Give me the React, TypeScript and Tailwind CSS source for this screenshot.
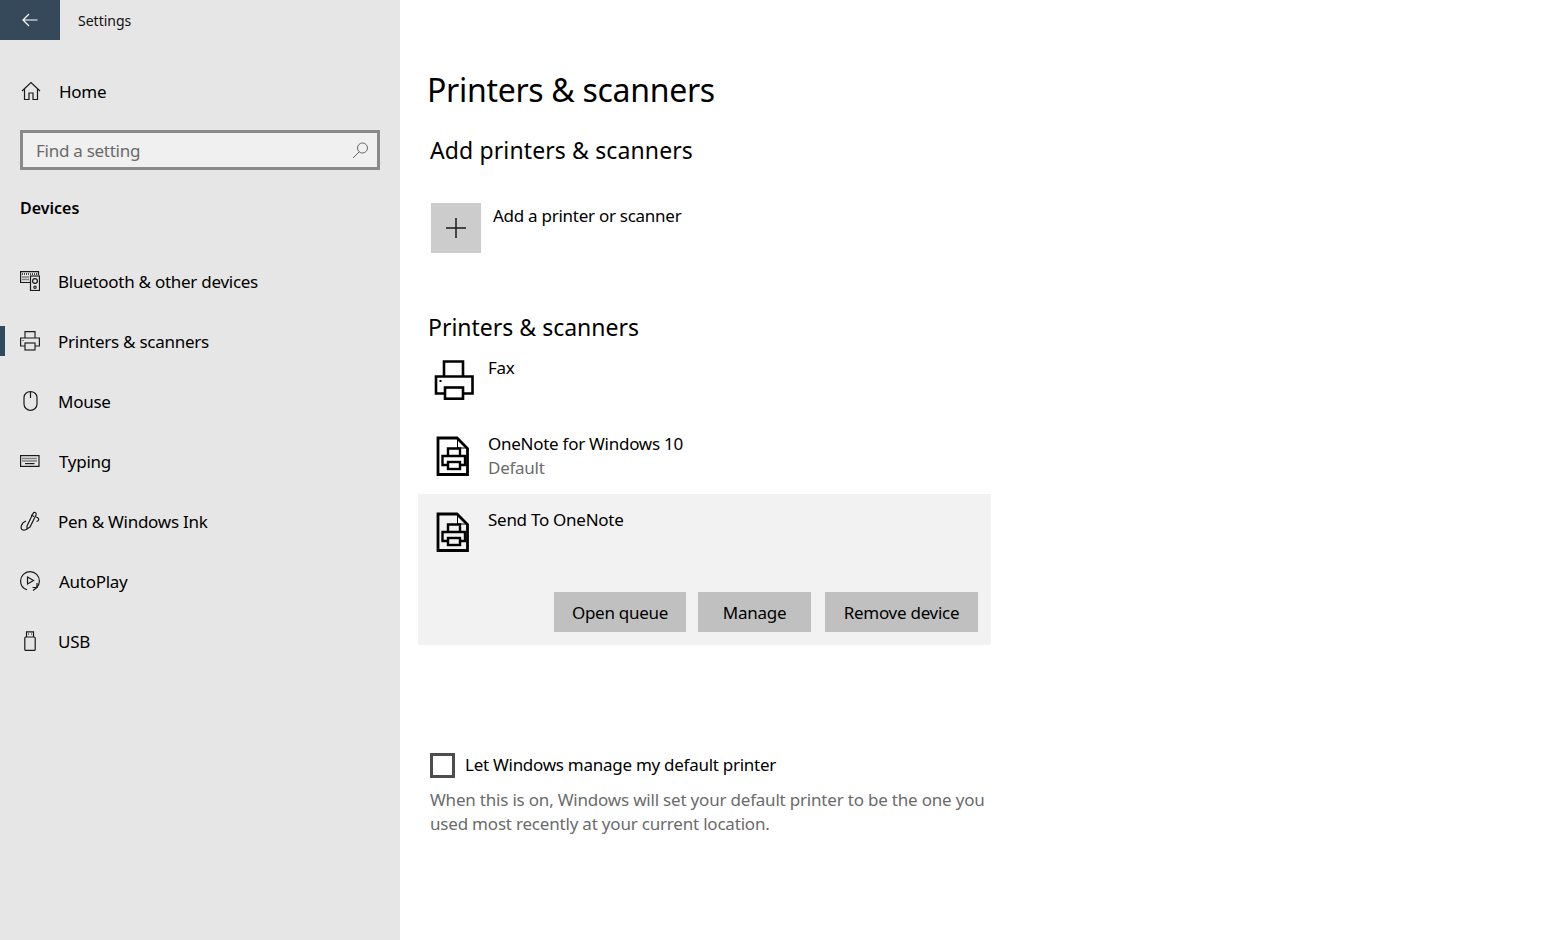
const FONT = "font-['Noto_Sans','Open_Sans',sans-serif]"
const BODY = "text-[17px] tracking-[-0.27px]"

function HomeIcon() {
	return (
		<svg width="20" height="20" viewBox="0 0 20 20" fill="none" stroke="#1a1a1a" strokeWidth="1.2">
			<path d="M1 10 L10 1.5 L19 10" />
			<path d="M3.5 8 V18.5 H8 V12 H12 V18.5 H16.5 V8" />
		</svg>
	)
}

function DevicesIcon() {
	return (
		<svg width="20" height="20" viewBox="0 0 20 20" fill="none" stroke="#1a1a1a" strokeWidth="1.2">
			<path d="M10 11.5 H0.6 V0.6 H18.5 V4" />
			<path d="M2 3 H17 M2.5 6 H9 M2.5 8.5 H9" strokeDasharray="1 1" strokeWidth="1.5" />
			<rect x="10.5" y="5" width="9" height="14.5" />
			<circle cx="15" cy="10" r="2.4" />
			<circle cx="15" cy="16.2" r="1.2" />
		</svg>
	)
}

function SmallPrinterIcon() {
	return (
		<svg width="20" height="20" viewBox="0 0 20 20" fill="none" stroke="#1a1a1a" strokeWidth="1.15">
			<path d="M5 7 V0.6 H15 V7" />
			<path d="M5 15 H0.6 V7 H19.4 V15 H15" />
			<rect x="5" y="12" width="10" height="7" />
			<path d="M2.5 9.5 H3.5" />
		</svg>
	)
}

function MouseIcon() {
	return (
		<svg width="15" height="20" viewBox="0 0 15 20" fill="none" stroke="#1a1a1a" strokeWidth="1.2">
			<path d="M1 6.5 C1 3 4 0.7 7.5 0.7 C11 0.7 14 3 14 6.5 V13 C14 16.5 11 19.3 7.5 19.3 C4 19.3 1 16.5 1 13 Z" />
			<path d="M7.5 1 V7" />
		</svg>
	)
}

function KeyboardIcon() {
	return (
		<svg width="20" height="12" viewBox="0 0 20 12" fill="none" stroke="#1a1a1a" strokeWidth="1.2">
			<rect x="0.6" y="0.6" width="18.4" height="10.8" />
			<path d="M2.5 3.5 H17 M2.5 6 H17" strokeDasharray="1 1" strokeWidth="1.5" />
			<path d="M5 8.6 H14.5" />
		</svg>
	)
}

function PenIcon() {
	return (
		<svg width="20" height="20" viewBox="0 0 20 20" fill="none" stroke="#1a1a1a" strokeWidth="1.2">
			<path d="M7 15 L13 2.5 C14 0.5 17 1.5 16 4 L10 16 L7 18 Z" />
			<path d="M11 4 L14 5.5" />
			<path d="M16 6 C20 7 19 10 16.5 10.5" />
			<path d="M6 10 C1 12 -0.5 18 3 19 C4.5 19.4 6 18.5 7 18" />
		</svg>
	)
}

function AutoplayIcon() {
	return (
		<svg width="20" height="20" viewBox="0 0 20 20" fill="none" stroke="#1a1a1a" strokeWidth="1.2">
			<path d="M7 18.8 C3.2 17.6 0.6 14.2 0.6 10 C0.6 4.8 4.8 0.6 10 0.6 C15.2 0.6 19.4 4.8 19.4 10 C19.4 12.6 18.4 14.8 16.7 16.5" />
			<path d="M7.5 6 V13 L13.5 9.5 Z" />
			<path d="M12.5 16.5 H17 V12 M17 16.5 L13 19.5" />
		</svg>
	)
}

function UsbIcon() {
	return (
		<svg width="12" height="20" viewBox="0 0 12 20" fill="none" stroke="#1a1a1a" strokeWidth="1.2">
			<rect x="0.8" y="6" width="10.4" height="13.4" rx="1" />
			<path d="M2.5 6 V0.8 H9.5 V6" />
			<path d="M4 3 H5 M7 3 H8" />
		</svg>
	)
}

function FaxIcon() {
	return (
		<svg width="40" height="40" viewBox="0 0 40 40" fill="none" stroke="#000" strokeWidth="2.6">
			<path d="M10 16 V1.5 H29 V16" />
			<path d="M11 33.5 H2 V16.5 H38.5 V33.5 H29" />
			<rect x="11" y="27.5" width="18" height="11.2" />
			<rect x="5.5" y="20" width="2" height="2" fill="#000" stroke="none" />
		</svg>
	)
}

function DocPrinterIcon() {
	return (
		<svg width="33" height="40" viewBox="0 0 33 40" fill="none" stroke="#000" strokeWidth="2.8">
			<path d="M2 2 H21 L31.5 12.5 V38.5 H2 Z" />
			<path d="M21.5 3 V12 H30.5" strokeWidth="1" />
			<path d="M12 20 V12.5 H24 V20" strokeWidth="2.4" />
			<path d="M12 29 H6.5 V20 H29 V29 H24" strokeWidth="2.4" />
			<rect x="12" y="26" width="12" height="7" strokeWidth="2.4" />
		</svg>
	)
}

const NAV = [
	{ label: "Bluetooth & other devices", icon: <DevicesIcon />, gap: "gap-[18px]" },
	{ label: "Printers & scanners", icon: <SmallPrinterIcon />, active: true, gap: "gap-[18px]" },
	{ label: "Mouse", icon: <MouseIcon />, gap: "gap-[18px]" },
	{ label: "Typing", icon: <KeyboardIcon />, gap: "gap-[19px]" },
	{ label: "Pen & Windows Ink", icon: <PenIcon />, gap: "gap-[18px]" },
	{ label: "AutoPlay", icon: <AutoplayIcon />, gap: "gap-[19px]" },
	{ label: "USB", icon: <UsbIcon />, gap: "gap-[18px]" },
]

export default function App() {
	return (
		<div className={`flex h-[940px] w-[1542px] overflow-hidden bg-white text-black ${FONT}`}>
			{/* Sidebar */}
			<aside className="flex h-full w-[400px] shrink-0 flex-col bg-[#e6e6e6]">
				<div className="flex h-10 items-center">
					<div className="flex h-10 w-[60px] items-center justify-center bg-[#36495a]">
						<svg width="16" height="14" viewBox="0 0 16 14" fill="none" stroke="#fff" strokeWidth="1.2">
							<path d="M15.5 7 H1 M7 1 L1 7 L7 13" />
						</svg>
					</div>
					<span className="ml-[18px] text-[14px] text-[#111]">Settings</span>
				</div>

				<div className={`mt-[21px] flex h-[60px] items-center gap-[18px] pl-[21px] ${BODY}`}>
					<HomeIcon />
					<span className="pt-[2px]">Home</span>
				</div>

				<div className="mx-5 mt-[9px] flex h-10 items-center justify-between border-[3px] border-[#8a8a8a] bg-[#f0f0f0] pl-[13px] pr-[8px]">
					<span className={`pt-[2px] ${BODY} text-[#6a6a6a]`}>Find a setting</span>
					<svg width="17" height="17" viewBox="0 0 17 17" fill="none" stroke="#666" strokeWidth="1">
						<circle cx="10.5" cy="6" r="5" />
						<path d="M7 10 L1 16" />
					</svg>
				</div>

				<div className="mt-[19px] flex h-[38px] items-center pl-5 text-[16px] font-semibold">Devices</div>

				<nav className="mt-6 flex flex-col">
					{NAV.map((item) => (
						<div key={item.label} className={`relative flex h-[60px] items-center pl-5 ${BODY} ${item.gap}`}>
							{item.active && <div className="absolute left-0 top-[15px] h-[30px] w-[5px] bg-[#2c4a60]" />}
							<div className="flex w-5 justify-center">{item.icon}</div>
							<span className="pt-[2px]">{item.label}</span>
						</div>
					))}
				</nav>
			</aside>

			{/* Content */}
			<main className="flex w-[591px] flex-col pl-[18px]">
				<h1 className="ml-[9px] mt-[66px] text-[32px] leading-[48px] tracking-[-0.3px]">Printers &amp; scanners</h1>
				<h2 className="ml-3 mt-5 text-[23px] leading-[32px] tracking-[0.12px]">Add printers &amp; scanners</h2>

				<div className="ml-[13px] mt-[37px] flex gap-3">
					<div className="flex h-[50px] w-[50px] items-center justify-center bg-[#cccccc]">
						<svg width="20" height="20" viewBox="0 0 20 20" stroke="#1a1a1a" strokeWidth="1.5">
							<path d="M10 0 V20 M0 10 H20" />
						</svg>
					</div>
					<span className={`${BODY} leading-[26px]`}>Add a printer or scanner</span>
				</div>

				<h2 className="ml-[10px] mt-[58px] text-[23px] leading-[32px]">Printers &amp; scanners</h2>

				<div className="ml-4 mt-[17px] flex h-10 gap-[14px]">
					<FaxIcon />
					<span className={`${BODY} leading-[16px]`}>Fax</span>
				</div>

				<div className="ml-[18px] mt-9 flex gap-[19px]">
					<DocPrinterIcon />
					<div className={`${BODY} leading-6`}>
						<div className="-mt-[4px]">OneNote for Windows 10</div>
						<div className="text-[#6b6b6b]">Default</div>
					</div>
				</div>

				<section className="mt-[14px] flex h-[151px] w-[573px] flex-col bg-[#f2f2f2] pl-[18px] pr-[13px]">
					<div className="mt-[18px] flex gap-[19px]">
						<DocPrinterIcon />
						<span className={`-mt-[4px] ${BODY} leading-6`}>Send To OneNote</span>
					</div>
					<div className={`mt-10 flex justify-end ${BODY}`}>
						<button className="h-10 w-[132px] bg-[#c0c0c0] pt-[2px]">Open queue</button>
						<button className="ml-3 h-10 w-[113px] bg-[#c0c0c0] pt-[2px]">Manage</button>
						<button className="ml-[14px] h-10 w-[153px] bg-[#c0c0c0] pt-[2px]">Remove device</button>
					</div>
				</section>

				<div className="ml-3 mt-[108px] flex items-center gap-[10px]">
					<div className="h-[25px] w-[25px] border-[3px] border-[#4d4d4d]" />
					<span className={`-mt-[1px] ${BODY} leading-6`}>Let Windows manage my default printer</span>
				</div>
				<p className="ml-3 mt-[10px] text-[17px] leading-6 tracking-[-0.2px] text-[#6b6b6b]">
					When this is on, Windows will set your default printer to be the one you used most recently at your current location.
				</p>
			</main>
		</div>
	)
}
